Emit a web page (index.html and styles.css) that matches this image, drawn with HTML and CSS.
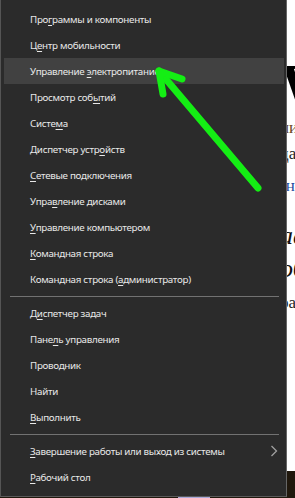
FILE: index.html
```html
<!DOCTYPE html>
<html lang="ru">
<head>
<meta charset="utf-8">
<link rel="stylesheet" href="styles.css">
</head>
<body>
<div class="screen">
  <div class="page">
    <div class="page-col">
      <div class="pg-head">W</div>
      <div class="pg-line pg-brown">ии</div>
      <div class="pg-line pg-dark">да</div>
      <div class="pg-line pg-link"><span class="dot">·</span>на</div>
      <div class="pg-big">аа</div>
      <div class="pg-big">об</div>
      <div class="pg-line pg-dark pg-last">ра</div>
    </div>
  </div>
  <div class="taskbar"><span class="task-active"></span></div>

  <nav class="menu">
    <div class="group">
      <div class="item"><span class="label">Про<u>г</u>раммы и компоненты</span></div>
      <div class="item"><span class="label">Ц<u>е</u>нтр мобильности</span></div>
      <div class="item active"><span class="label">Управление <u>э</u>лектропитанием</span></div>
      <div class="item"><span class="label">Просмотр соб<u>ы</u>тий</span></div>
      <div class="item"><span class="label">Систе<u>м</u>а</span></div>
      <div class="item"><span class="label">Диспетчер устр<u>о</u>йств</span></div>
      <div class="item"><span class="label"><u>С</u>етевые подключения</span></div>
      <div class="item"><span class="label">Упра<u>в</u>ление дисками</span></div>
      <div class="item"><span class="label"><u>У</u>правление компьютером</span></div>
      <div class="item"><span class="label"><u>К</u>омандная строка</span></div>
      <div class="item"><span class="label">Командная строка (<u>а</u>дминистратор)</span></div>
    </div>
    <div class="sep"></div>
    <div class="group">
      <div class="item"><span class="label">Д<u>и</u>спетчер задач</span></div>
      <div class="item"><span class="label">Пане<u>л</u>ь управления</span></div>
      <div class="item"><span class="label">Проводник</span></div>
      <div class="item"><span class="label">Найти</span></div>
      <div class="item"><span class="label"><u>В</u>ыполнить</span></div>
    </div>
    <div class="sep"></div>
    <div class="group">
      <div class="item has-sub"><span class="label"><u>З</u>авершение работы или выход из системы</span>
        <svg class="chev" width="8" height="12" viewBox="0 0 8 12"><polyline points="1.5,1 6.5,6 1.5,11" fill="none" stroke="#a0a0a0" stroke-width="1.3"/></svg>
      </div>
      <div class="item"><span class="label"><u>Р</u>абочий стол</span></div>
    </div>
  </nav>

  <svg class="arrow" width="295" height="498" viewBox="0 0 295 498">
    <g fill="none" stroke="#14ee14" stroke-width="7" stroke-linecap="round" stroke-linejoin="round">
      <line x1="159" y1="71" x2="258" y2="188"/>
      <polyline points="182,79 159,71 163,94"/>
    </g>
  </svg>
</div>
</body>
</html>
```

FILE: styles.css
```css
* { box-sizing: border-box; }
html, body { margin: 0; padding: 0; }
body { background: #fff; width: 295px; height: 498px; overflow: hidden; }

.screen { position: relative; width: 295px; height: 498px; display: flex; flex-direction: column; }

.page { height: 471px; background: #fff; overflow: hidden; }
.page-col { margin-left: 280px; font-family: "Liberation Serif", serif; white-space: nowrap; }
.pg-head { margin-top: 62px; height: 46px; font-size: 60px; line-height: 46px; font-weight: bold; color: #000; }
.pg-line { font-size: 17px; line-height: 26px; }
.pg-brown { margin-top: 7px; color: #6a4522; }
.pg-dark { color: #222; }
.pg-link { margin-top: 6px; color: #1f4ea0; }
.pg-link .dot { color: #e08a2a; }
.pg-big { font-size: 26px; line-height: 33px; font-style: italic; color: #111; }
.pg-line + .pg-big { margin-top: 20px; }
.pg-last { margin-top: 5px; }

.taskbar { flex: 1; background: #20180d; display: flex; align-items: flex-end; }
.task-active { display: block; margin-left: 178px; width: 32px; height: 3px; background: #aaa8d8; }

.menu {
  position: absolute; left: 0; top: 0;
  width: 287px; height: 497px;
  background: #2b2b2b;
  border-left: 1px solid #555;
  border-right: 1px solid #666;
  border-bottom: 1px solid #5a5a5a;
  padding-top: 6px;
  font-family: "Noto Sans", "Open Sans", sans-serif;
  font-size: 9.8px;
  letter-spacing: -0.3px;
  color: #e8e8e8;
}
.item {
  height: 26px;
  padding-left: 29px;
  padding-right: 8px;
  display: flex; align-items: center; justify-content: space-between;
  white-space: nowrap;
}
.label { display: block; }
.item u { text-decoration-thickness: 1px; text-underline-offset: 2px; }
.item.active { background: #414141; margin: 0 2px 0 3px; padding-left: 26px; }
.sep { height: 8px; display: flex; align-items: center; padding: 0 7px 0 9px; }
.sep::before { content: ""; display: block; width: 100%; height: 1px; background: #727272; }

.arrow { position: absolute; left: 0; top: 0; pointer-events: none; }
```
